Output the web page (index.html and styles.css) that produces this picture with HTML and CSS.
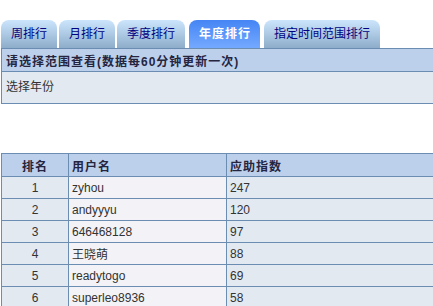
FILE: index.html
```html
<!DOCTYPE html>
<html lang="zh-CN">
<head>
    <meta charset="UTF-8">
    <title>应助排行</title>
    <link rel="stylesheet" href="styles.css">
</head>
<body>

<div class="page">
    <ul class="tabs">
        <li class="tab">周排行</li>
        <li class="tab">月排行</li>
        <li class="tab">季度排行</li>
        <li class="tab active">年度排行</li>
        <li class="tab">指定时间范围排行</li>
    </ul>

    <table class="filter">
        <tr><th>请选择范围查看(数据每60分钟更新一次)</th></tr>
        <tr><td>选择年份</td></tr>
    </table>

    <table class="rank">
        <thead>
            <tr>
                <th class="num">排名</th>
                <th class="user">用户名</th>
                <th>应助指数</th>
            </tr>
        </thead>
        <tbody>
            <tr><td class="num">1</td><td class="user">zyhou</td><td>247</td></tr>
            <tr><td class="num">2</td><td class="user">andyyyu</td><td>120</td></tr>
            <tr><td class="num">3</td><td class="user">646468128</td><td>97</td></tr>
            <tr><td class="num">4</td><td class="user">王晓萌</td><td>88</td></tr>
            <tr><td class="num">5</td><td class="user">readytogo</td><td>69</td></tr>
            <tr><td class="num">6</td><td class="user">superleo8936</td><td>58</td></tr>
        </tbody>
    </table>
</div>

</body>
</html>
```

FILE: styles.css
```css
html, body {
    margin: 0;
    overflow: hidden;
}
body {
    font-family: "Liberation Sans", "Noto Sans CJK SC", sans-serif;
    font-size: 12px;
    color: #333;
}
.page {
    width: 433px;
    padding: 20px 0 0 1px;
}
.tabs {
    display: flex;
    gap: 2px;
    margin: 0;
    padding: 0;
    list-style: none;
}
.tab {
    height: 28px;
    line-height: 29px;
    padding: 0 10px;
    border-radius: 8px 8px 0 0;
    background: linear-gradient(#cce5fd, #8eadca);
    color: #000080;
}
.tab.active {
    margin: 0 2px;
    padding: 0 9px 0 10px;
    background: linear-gradient(#4585f4, #74a9ff);
    color: #fff;
    font-weight: bold;
    letter-spacing: 1px;
}
table {
    width: 100%;
    border-collapse: collapse;
}
th, td {
    border: 1px solid #6b8db2;
    text-align: left;
    font-weight: normal;
}
th {
    background-color: #bcd0ec;
    font-weight: bold;
    letter-spacing: 1px;
    color: #25253f;
}
.filter th {
    height: 22px;
    padding: 0 4px;
}
.filter td {
    height: 26px;
    padding: 0 4px 5px;
    background-color: #e2e9f1;
}
.rank {
    margin-top: 49px;
}
.rank th {
    height: 22px;
    padding: 0 3px;
}
.rank td {
    height: 21px;
    padding: 0 3px;
    background-color: #e2e9f1;
}
.rank .num {
    width: 60px;
    text-align: center;
}
.rank .user {
    width: 151px;
}
.rank td.user {
    background-color: #f2f2f7;
}
```
